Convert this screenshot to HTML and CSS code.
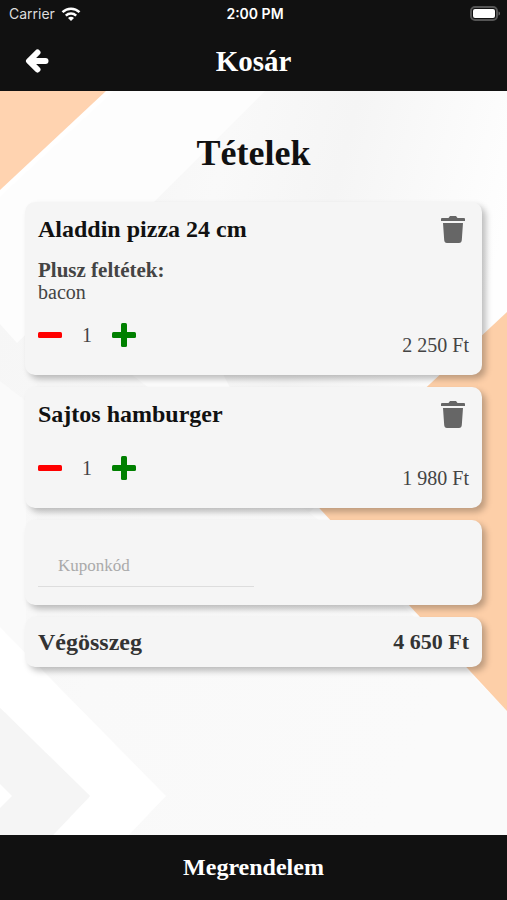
FILE: index.html
```html
<!DOCTYPE html>
<html lang="hu">

<head>
    <meta charset="UTF-8" />
    <meta name="viewport" content="width=device-width, initial-scale=1.0" />
    <title>Kosár</title>
    <link rel="stylesheet" href="styles.css">
</head>

<body>
    <header class="header">
        <div class="status-bar">
            <div class="carrier">
                <span>Carrier</span>
                <svg width="20" height="14" viewBox="0 0 20 14" fill="none" stroke="#fff" stroke-width="2.5">
                    <path d="M1.5 5.2C6.3 .6 13.7 .6 18.5 5.2" />
                    <path d="M4.8 8.6C7.8 5.8 12.2 5.8 15.2 8.6" />
                    <path d="M10 14L7 11C8.7 9.4 11.3 9.4 13 11Z" fill="#fff" stroke="none" />
                </svg>
            </div>
            <span class="time">2:00 PM</span>
            <svg class="battery" width="31" height="15" viewBox="0 0 31 15">
                <rect x="1" y="1" width="26" height="13" rx="4" fill="#111" stroke="#555" stroke-width="2" />
                <rect x="3" y="3" width="22" height="9" rx="2" fill="#fff" />
                <path d="M28.5 5.5C30.5 6 30.5 9 28.5 9.5Z" fill="#666" />
            </svg>
        </div>
        <div class="nav-bar">
            <button class="back" aria-label="Vissza">
                <svg width="24" height="24" viewBox="0 0 24 24" fill="none" stroke="#fff" stroke-width="6"
                    stroke-linecap="round" stroke-linejoin="round">
                    <path d="M12.5 3.5L4 12L12.5 20.5" />
                    <path d="M5 12H20.5" />
                </svg>
            </button>
            <h1>Kosár</h1>
        </div>
    </header>

    <main class="content">
        <svg class="background" viewBox="0 0 507 744" preserveAspectRatio="none" aria-hidden="true">
            <defs>
                <linearGradient id="band" x1="0" y1="0" x2="1" y2="0.3">
                    <stop offset="0" stop-color="#f6f6f6" />
                    <stop offset="0.25" stop-color="#f9f9f9" />
                    <stop offset="0.55" stop-color="#f5f5f5" />
                    <stop offset="1" stop-color="#fefefe" />
                </linearGradient>
                <linearGradient id="lower" x1="0" y1="0" x2="1" y2="0.4">
                    <stop offset="0" stop-color="#f6f6f6" />
                    <stop offset="0.4" stop-color="#f9f9f9" />
                    <stop offset="1" stop-color="#fafafa" />
                </linearGradient>
            </defs>
            <rect width="507" height="744" fill="#fdfdfd" />
            <path d="M265 0H507V240L300 430L140 125Z" fill="url(#band)" />
            <path d="M0 233L17 252L50 220L320 430L507 620V744H0Z" fill="url(#lower)" />
            <path d="M0 290L26 310V570L0 540Z" fill="#fafafa" />
            <path d="M0 536L166 705L129 744H53L90 705L0 617Z" fill="#fff" />
            <path d="M0 617L90 705L53 744H0Z" fill="#f5f5f5" />
            <path d="M0 693L12 705L0 717Z" fill="#fff" />
            <path d="M0 0H114L0 106Z" fill="#fff" />
            <path d="M0 0H106L0 99Z" fill="#ffd3b0" />
            <path d="M507 221L309 406L507 620Z" fill="#fdcfa8" />
        </svg>

        <h2>Tételek</h2>

        <section class="card item">
            <div class="item-header">
                <h3>Aladdin pizza 24 cm</h3>
                <button class="trash" aria-label="Törlés">
                    <svg width="24" height="28" viewBox="0 0 24 28" fill="#666">
                        <path d="M1 3H7.5L9 1H15L16.5 3H23Q24 3 24 4V6H0V4Q0 3 1 3Z" />
                        <path d="M2 8H22L20.8 25Q20.6 28 18 28H6Q3.4 28 3.2 25Z" />
                    </svg>
                </button>
            </div>
            <div class="toppings">
                <strong>Plusz feltétek:</strong>
                <span>bacon</span>
            </div>
            <div class="item-footer">
                <div class="counter">
                    <button aria-label="Kevesebb">
                        <svg width="24" height="24" viewBox="0 0 24 24" fill="red">
                            <rect y="9" width="24" height="6" rx="1.5" />
                        </svg>
                    </button>
                    <span>1</span>
                    <button aria-label="Több">
                        <svg width="24" height="24" viewBox="0 0 24 24" fill="green">
                            <rect y="9" width="24" height="6" rx="1.5" />
                            <rect x="9" width="6" height="24" rx="1.5" />
                        </svg>
                    </button>
                </div>
                <span class="price">2 250 Ft</span>
            </div>
        </section>

        <section class="card item">
            <div class="item-header">
                <h3>Sajtos hamburger</h3>
                <button class="trash" aria-label="Törlés">
                    <svg width="24" height="28" viewBox="0 0 24 28" fill="#666">
                        <path d="M1 3H7.5L9 1H15L16.5 3H23Q24 3 24 4V6H0V4Q0 3 1 3Z" />
                        <path d="M2 8H22L20.8 25Q20.6 28 18 28H6Q3.4 28 3.2 25Z" />
                    </svg>
                </button>
            </div>
            <div class="item-footer">
                <div class="counter">
                    <button aria-label="Kevesebb">
                        <svg width="24" height="24" viewBox="0 0 24 24" fill="red">
                            <rect y="9" width="24" height="6" rx="1.5" />
                        </svg>
                    </button>
                    <span>1</span>
                    <button aria-label="Több">
                        <svg width="24" height="24" viewBox="0 0 24 24" fill="green">
                            <rect y="9" width="24" height="6" rx="1.5" />
                            <rect x="9" width="6" height="24" rx="1.5" />
                        </svg>
                    </button>
                </div>
                <span class="price">1 980 Ft</span>
            </div>
        </section>

        <section class="card coupon">
            <input type="text" placeholder="Kuponkód" aria-label="Kuponkód">
        </section>

        <section class="card total">
            <span>Végösszeg</span>
            <span class="sum">4 650 Ft</span>
        </section>
    </main>

    <button class="order">Megrendelem</button>
</body>

</html>
```

FILE: styles.css
```css
* {
    box-sizing: border-box;
}

body {
    display: flex;
    flex-direction: column;
    min-height: 100vh;
    margin: 0;
    font-family: Baskerville, 'Liberation Serif', serif;
    color: #444;
}

h1,
h2,
h3 {
    margin: 0;
}

button {
    padding: 0;
    border: none;
    background: none;
    font-family: inherit;
    cursor: pointer;
}

svg {
    display: block;
}

/* Header */
.header {
    background: #111;
    color: #fff;
}

.status-bar {
    display: grid;
    grid-template-columns: 1fr auto 1fr;
    align-items: center;
    height: 27px;
    padding: 0 6px 0 9px;
    font-family: Inter, sans-serif;
    font-size: 14px;
}

.carrier {
    display: flex;
    align-items: center;
    gap: 6px;
    color: #ddd;
}

.time {
    font-weight: 600;
}

.battery {
    justify-self: end;
}

.nav-bar {
    display: grid;
    grid-template-columns: 24px 1fr 24px;
    align-items: center;
    height: 64px;
    padding: 4px 25px 0;
}

.nav-bar h1 {
    font-size: 29px;
    line-height: 32px;
    text-align: center;
}

/* Content */
.content {
    position: relative;
    flex: 1;
    display: flex;
    flex-direction: column;
    gap: 12px;
    padding: 40px 25px;
}

.background {
    position: absolute;
    top: 0;
    left: 0;
    width: 100%;
    height: 100%;
    z-index: -1;
}

.content h2 {
    margin-bottom: 15px;
    font-size: 36px;
    line-height: 44px;
    text-align: center;
    color: #111;
}

.card {
    padding: 13px;
    border-radius: 10px;
    background: #f5f5f5;
    box-shadow: 4px 4px 6px rgba(0, 0, 0, 0.25);
}

.item-header {
    display: flex;
    justify-content: space-between;
    align-items: center;
    height: 28px;
}

.item h3 {
    font-size: 24px;
    line-height: 28px;
    color: #111;
}

.trash {
    margin-right: 4px;
}

.toppings {
    display: flex;
    flex-direction: column;
    margin-top: 16px;
    font-size: 20px;
    line-height: 22px;
}

.toppings strong {
    font-size: 21px;
}

.item-footer {
    display: flex;
    justify-content: space-between;
    align-items: flex-end;
    height: 45px;
    margin-top: 22px;
    padding-bottom: 5px;
    font-size: 20px;
    line-height: 24px;
}

.toppings + .item-footer {
    margin-top: 14px;
}

.counter {
    display: flex;
    align-items: center;
    gap: 20px;
    align-self: flex-start;
    margin-top: 6px;
}

.coupon {
    padding-bottom: 18px;
}

.coupon input {
    display: block;
    width: 50%;
    height: 54px;
    padding: 12px 20px 0;
    border: none;
    border-bottom: 1px solid #ddd;
    background: none;
    font-family: inherit;
    font-size: 17px;
    outline: none;
}

.coupon input::placeholder {
    color: #aaa;
}

.total {
    display: flex;
    justify-content: space-between;
    align-items: center;
    font-size: 24px;
    font-weight: bold;
    line-height: 24px;
    color: #333;
}

.total .sum {
    font-size: 22px;
}

/* Order button */
.order {
    height: 65px;
    background: #111;
    color: #fff;
    font-size: 24px;
    font-weight: bold;
}
```
